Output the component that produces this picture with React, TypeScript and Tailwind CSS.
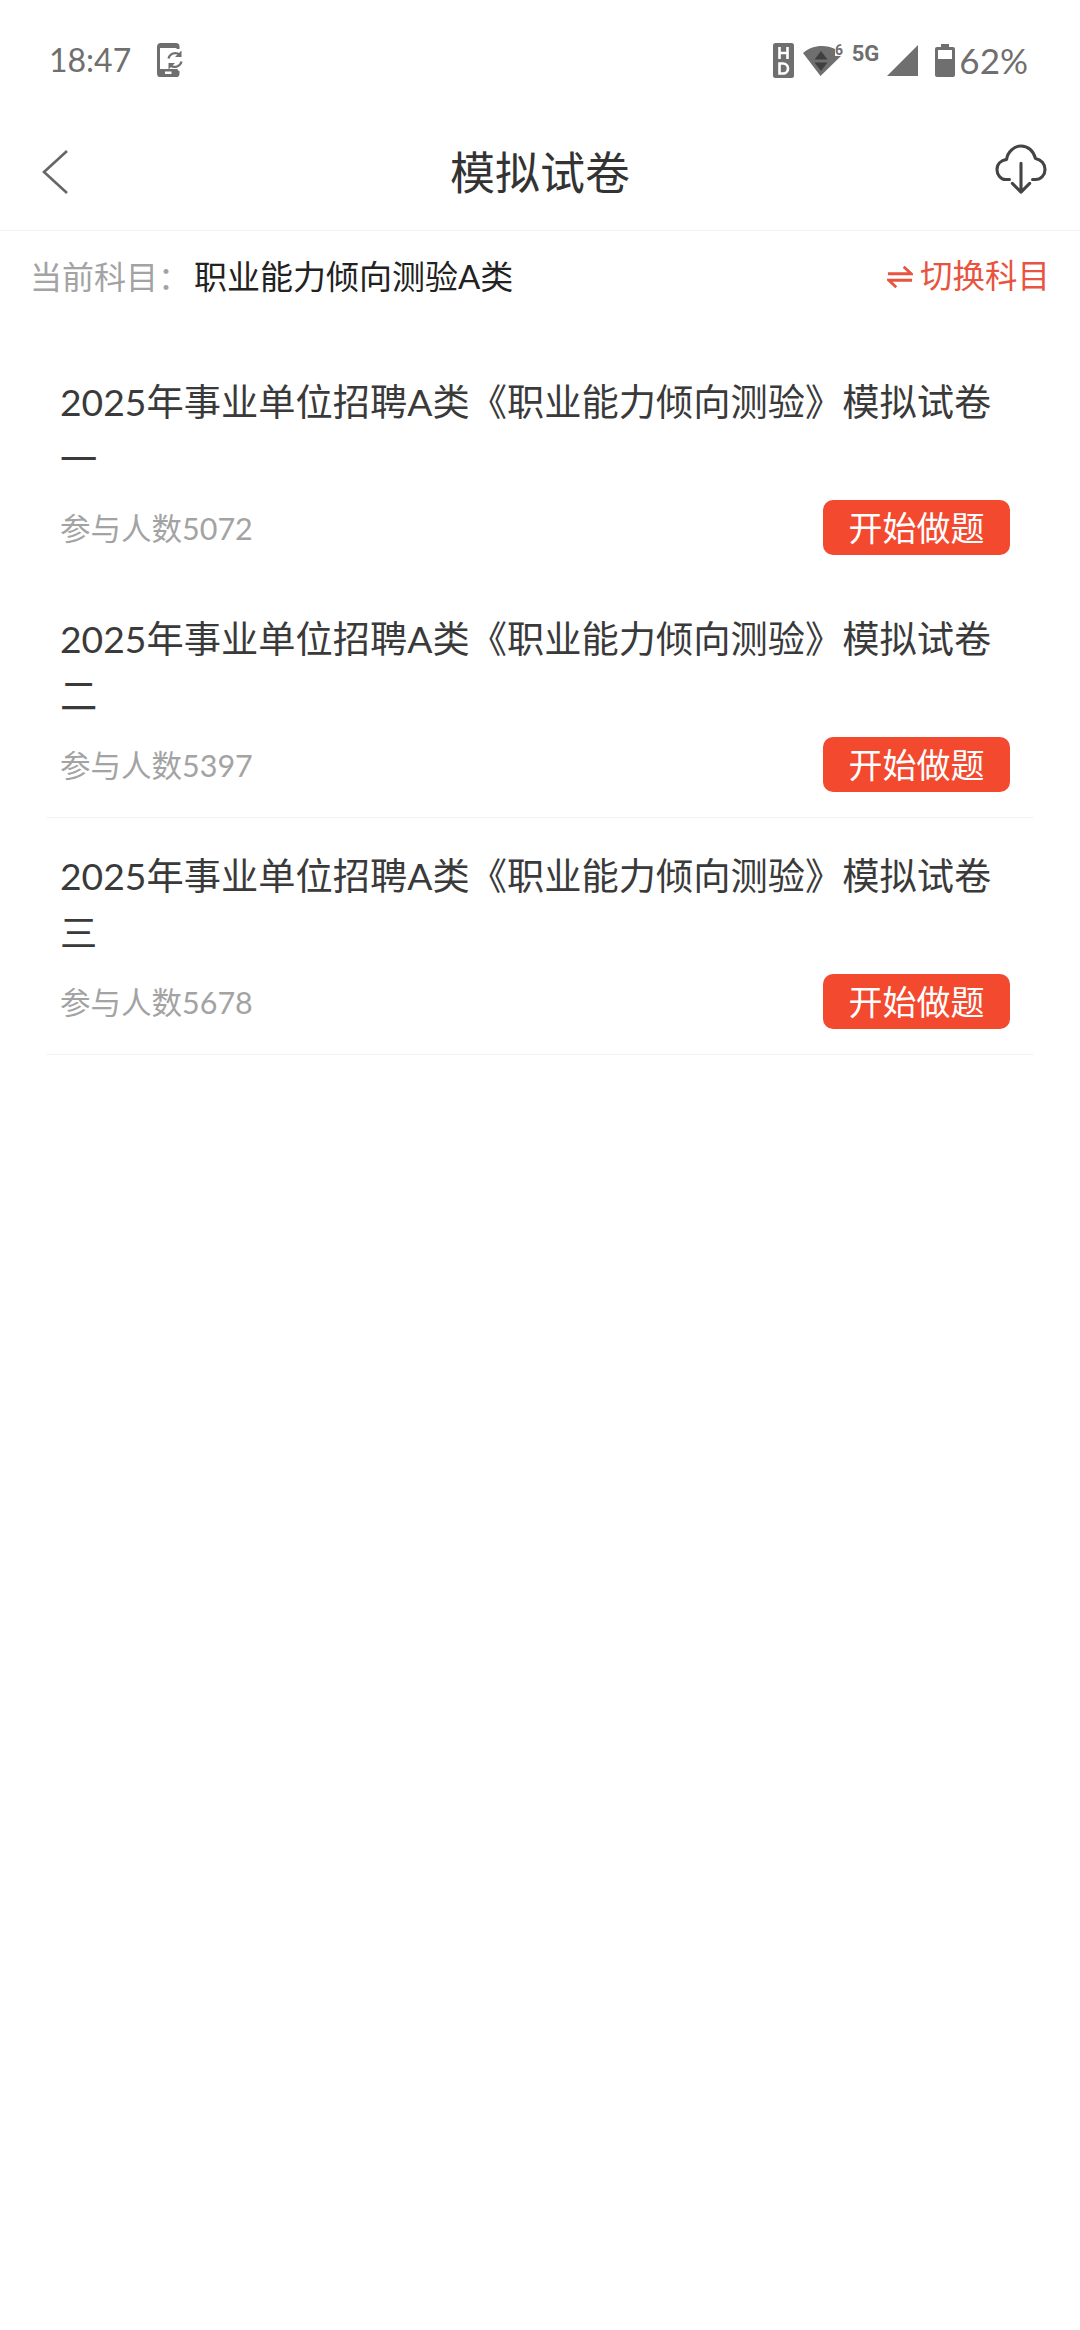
function Row({ title, last, count, line }: { title: string; last: string; count: string; line: boolean }) {
  return (
    <div className={`mx-[46px] h-[237px] px-[14px] pt-[29px] ${line ? "border-b border-[#f3f3f3]" : ""}`}>
      <div className="text-[37.25px] leading-[57px] text-[#3a3a3a]">
        <div className="whitespace-nowrap">{title}</div>
        <div>{last}</div>
      </div>
      <div className="mt-[13px] flex h-[55px] items-center justify-between pr-[10px]">
        <span className="mt-[2px] text-[30.5px] text-[#a3a3a3]">参与人数{count}</span>
        <span className="flex h-[55px] w-[187px] items-center justify-center rounded-[10px] bg-[#f3492f] text-[34px] text-white">开始做题</span>
      </div>
    </div>
  );
}

export default function App() {
  const t = "2025年事业单位招聘A类《职业能力倾向测验》模拟试卷";
  return (
    <div className="h-[2330px] w-[1080px] overflow-hidden bg-white font-['Lato','Noto_Sans_CJK_SC',sans-serif]">
      <div className="flex h-[120px] items-center justify-between pl-[49px] pr-[52px] text-[#6f6f6f]">
        <div className="flex items-center gap-[26px]">
          <span className="text-[32px]">18:47</span>
          <svg width="27" height="34" viewBox="0 0 27 34" fill="none">
            <path d="M21 6V3.500A2 2 0 0 0 19 1.500H3.500A2 2 0 0 0 1.500 3.500v27a2 2 0 0 0 2 2H19a2 2 0 0 0 2-2V28" stroke="#6f6f6f" strokeWidth="3" />
            <rect x="1" y="1" width="20.500" height="4" rx="1.500" fill="#6f6f6f" />
            <rect x="1" y="26" width="20.500" height="8" rx="2" fill="#6f6f6f" />
            <rect x="8" y="28.500" width="6.500" height="2.500" fill="#fff" />
            <path d="M11.500 15.500a7 7 0 0 1 11-4" stroke="#6f6f6f" strokeWidth="2.200" />
            <path d="M24.500 7.500v6.500h-6.500z" fill="#6f6f6f" />
            <path d="M24.500 18.500a7 7 0 0 1-11 4" stroke="#6f6f6f" strokeWidth="2.200" />
            <path d="M11.500 26.500V20h6.500z" fill="#6f6f6f" />
          </svg>
        </div>
        <div className="flex items-center">
          <svg width="21" height="35" viewBox="0 0 21 35" className="mr-[9px]">
            <rect width="21" height="35" rx="2.500" fill="#6f6f6f" />
            <path d="M6.500 4v12M14.500 4v12M6.500 10h8" stroke="#fff" strokeWidth="2.600" fill="none" />
            <path d="M6.500 20.500h3.500a5 5 0 0 1 0 10H6.500z" stroke="#fff" strokeWidth="2.600" fill="none" />
          </svg>
          <svg width="48" height="40" viewBox="0 -8 48 40" className="-mt-[8px] mr-[1px]">
            <path d="M0 9C5 4.500 12 2 19 2c5 0 9 1 13 3v7h6L17.500 32z" fill="#6f6f6f" />
            <path d="M18 7l6.500 8.500h-13zM18 27l6.500-8.500h-13z" fill="#3f3f3f" />
            <text x="32" y="11" fontSize="14" fontWeight="700" fill="#6f6f6f" fontFamily="Roboto, sans-serif">6</text>
          </svg>
          <span className="mr-[8px] -translate-y-[6px] font-['Roboto',sans-serif] text-[22px] font-bold leading-none">5G</span>
          <svg width="31" height="31" viewBox="0 0 31 31" className="mr-[17px]">
            <path d="M31 0v31H0z" fill="#6f6f6f" />
          </svg>
          <svg width="20" height="33" viewBox="0 0 20 33" className="mr-[4px]">
            <path d="M6 0h8v3h4a2 2 0 0 1 2 2v26a2 2 0 0 1-2 2H2a2 2 0 0 1-2-2V5a2 2 0 0 1 2-2h4z" fill="#6f6f6f" />
            <rect x="3" y="6" width="14" height="9" fill="#fff" />
          </svg>
          <span className="text-[35px] leading-none">62%</span>
        </div>
      </div>

      <div className="relative flex h-[111px] items-center justify-center border-b border-[#f3f3f3] pb-[4px]">
        <svg className="absolute left-[40px] top-[29px]" width="30" height="46" viewBox="0 0 30 46" fill="none">
          <path d="M27 2 4 23l23 21" stroke="#666" strokeWidth="2.600" />
        </svg>
        <span className="text-[45px] leading-none text-[#333333]">模拟试卷</span>
        <svg className="absolute left-[995px] top-[24px]" width="52" height="50" viewBox="0 0 54 52" fill="none" stroke="#444" strokeWidth="3.200" strokeLinecap="round" strokeLinejoin="round">
          <path d="M15 37h-4C6 37 2 32 2 26.500S6 17 12 16c1-8 8-14 15-14 7 0 13 5 15 13 6 1 10 6 10 11.500S48 37 42 37h-3" />
          <path d="M27 20v30M18 41l9 9 9-9" />
        </svg>
      </div>

      <div className="flex h-[92px] items-center justify-between pb-[1px] pl-[30px] pr-[30px]">
        <div className="flex items-center">
          <span className="text-[32px] text-[#a3a3a3]">当前科目：</span>
          <span className="ml-[4px] text-[33px] text-[#222222]">职业能力倾向测验A类</span>
        </div>
        <div className="flex items-center text-[#e8543f]">
          <svg width="26" height="24" viewBox="0 0 28 24" fill="none" stroke="#e8543f" strokeWidth="3" className="mr-[7px]">
            <path d="M1 8.500h25L18 1" />
            <path d="M27 15.500H2l8 7.500" />
          </svg>
          <span className="text-[32.5px]">切换科目</span>
        </div>
      </div>

      <div className="mt-[21px]">
        <Row title={t} last="一" count="5072" line={false} />
        <Row title={t} last="二" count="5397" line />
        <Row title={t} last="三" count="5678" line />
      </div>
    </div>
  );
}
